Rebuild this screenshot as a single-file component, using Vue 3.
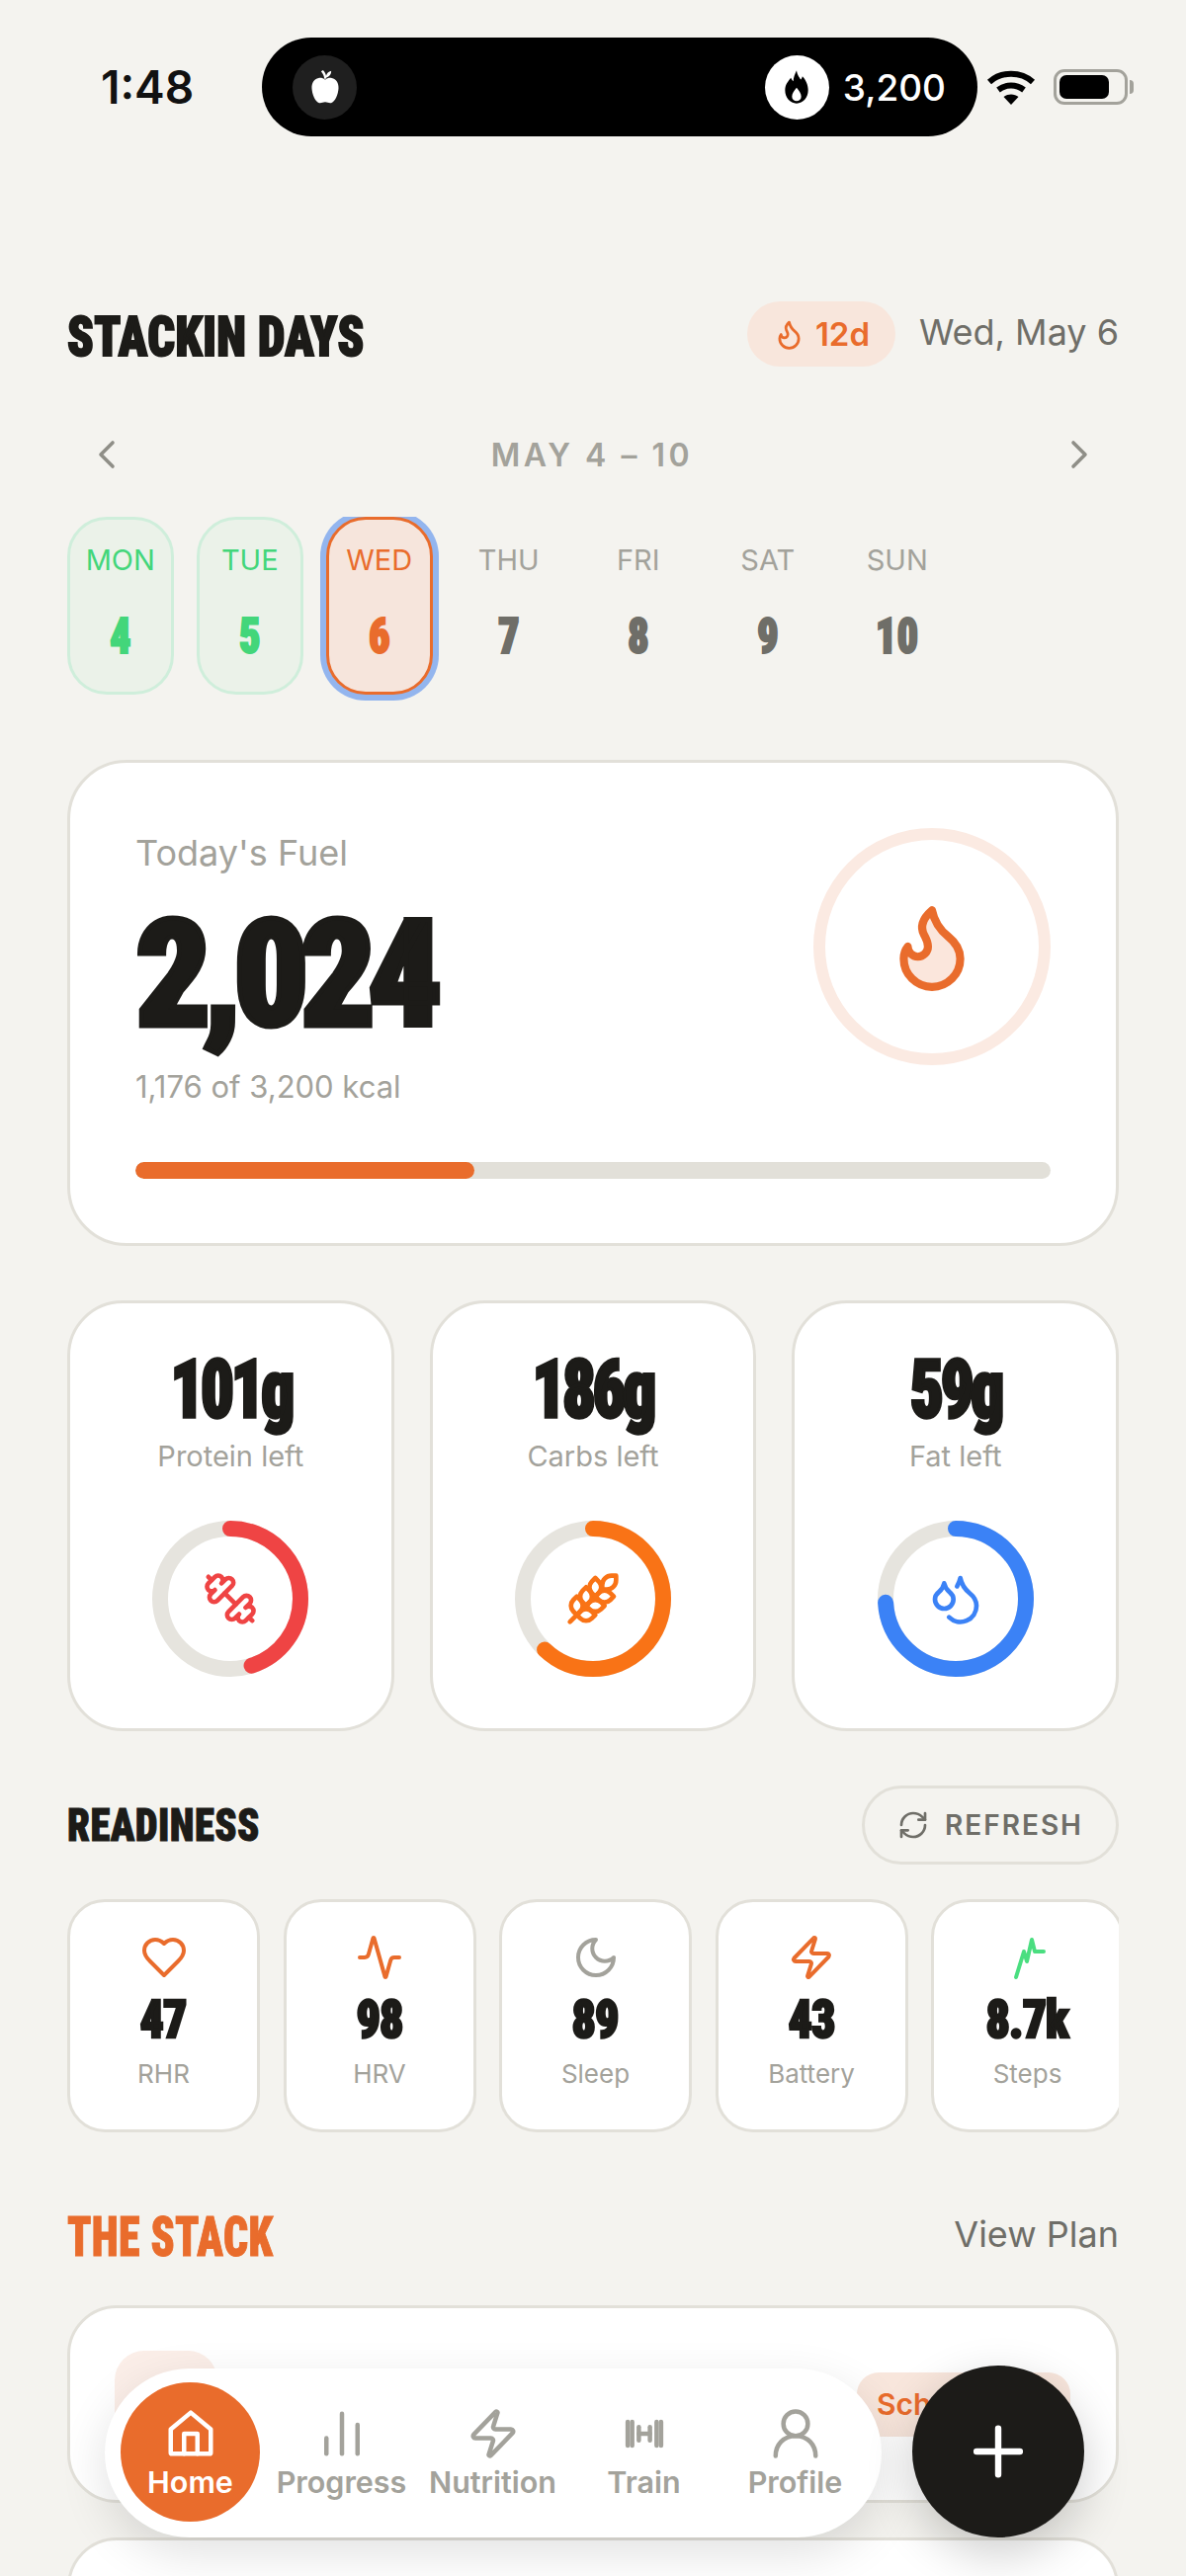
<template>
  <div class="screen">
    <!-- status bar -->
    <div class="status">
      <span class="clock">1:48</span>
      <div class="island">
        <span class="island-icon dark">
          <svg viewBox="0 0 24 24" width="40" height="40" fill="#fff">
            <path d="M12 7.6c1.2-.9 2.600-1.300 4-1 2.700.5 4.300 3 4.100 6.300-.2 3.700-2.100 8.100-4.500 8.800-1.200.3-2.200-.5-3.600-.5s-2.400.8-3.600.5c-2.400-.7-4.300-5.100-4.500-8.800C3.700 9.600 5.300 7.100 8 6.600c1.400-.3 2.800.1 4 1z" />
            <path d="M11.500 7c-.2-1.800-.8-3.200-2-4.500l1.200-.7c1 1 1.600 2.200 1.900 3.400.4-1.500 1.400-2.600 3.100-3 .1 1.900-1 3.500-3.100 4.200l-.1.600z" />
          </svg>
        </span>
        <span class="island-right">
          <span class="island-icon light">
            <svg viewBox="0 0 24 24" width="40" height="40" fill="#000">
              <path fill-rule="evenodd" d="M12 2c.4 3 1.800 4.300 2.500 5.500.5-.5.900-1.200 1-2 2 2 3.500 5 3.500 8.500 0 4.500-3 8-7 8s-7-3.500-7-8c0-3.500 2-5.500 3.500-7.500.5 1 .8 1.500 1.500 2C10 6.500 11 4 12 2zm0 10.500c-1.500 2-2.800 3.500-2.800 5.300 0 1.700 1.300 2.700 2.800 2.700s2.800-1 2.800-2.700c0-1.800-1.300-3.300-2.800-5.300z" />
            </svg>
          </span>
          <span class="island-num">3,200</span>
        </span>
      </div>
      <svg class="wifi" viewBox="0 0 50 36" width="50" height="36" fill="none" stroke="#000" stroke-width="6">
        <path d="M3 13C15 2 35 2 47 13" />
        <path d="M12 21c8-6 18-6 26 0" />
        <path d="M25 36l-7.500-8c4-3.500 11-3.500 15 0z" fill="#000" stroke="none" />
      </svg>
      <span class="battery"><i></i></span>
    </div>

    <!-- header -->
    <div class="head">
      <h1 class="disp title">STACKIN DAYS</h1>
      <div class="head-right">
        <span class="streak">
          <svg viewBox="0 0 24 24" width="33" height="33" fill="none" stroke="#e96c2c" stroke-width="2" stroke-linecap="round" stroke-linejoin="round"><path :d="flame" /></svg>
          12d
        </span>
        <span class="date">Wed, May 6</span>
      </div>
    </div>

    <div class="week-nav">
      <svg viewBox="0 0 24 24" width="48" height="48" fill="none" stroke="#8f8e87" stroke-width="1.8" stroke-linecap="round" stroke-linejoin="round"><path d="m15 18-6-6 6-6" /></svg>
      <span class="week-label">MAY 4 – 10</span>
      <svg viewBox="0 0 24 24" width="48" height="48" fill="none" stroke="#8f8e87" stroke-width="1.8" stroke-linecap="round" stroke-linejoin="round"><path d="m9 18 6-6-6-6" /></svg>
    </div>

    <div class="days">
      <div v-for="d in days" :key="d.name" class="day" :class="d.state">
        <span class="day-name">{{ d.name }}</span>
        <span class="disp day-num">{{ d.num }}</span>
      </div>
    </div>

    <!-- fuel card -->
    <div class="card fuel">
      <div class="fuel-top">
        <div>
          <div class="fuel-label">Today's Fuel</div>
          <div class="disp fuel-num">2,024</div>
          <div class="fuel-sub">1,176 of 3,200 kcal</div>
        </div>
        <div class="fuel-ring">
          <svg viewBox="0 0 24 24" width="98" height="98" fill="#fbe6dc" stroke="#e96c2c" stroke-width="2" stroke-linecap="round" stroke-linejoin="round"><path :d="flame" /></svg>
        </div>
      </div>
      <div class="bar"><div class="bar-fill" :style="{ width: '37%' }"></div></div>
    </div>

    <!-- macros -->
    <div class="macros">
      <div v-for="m in macros" :key="m.label" class="card macro">
        <div class="disp macro-num">{{ m.value }}</div>
        <div class="macro-label">{{ m.label }}</div>
        <div class="ring">
          <svg viewBox="0 0 158 158" width="158" height="158" fill="none" stroke-width="16">
            <circle cx="79" cy="79" r="71" stroke="#e6e4de" />
            <circle cx="79" cy="79" r="71" :stroke="m.color" stroke-linecap="round" :stroke-dasharray="`${m.pct * 446.1} 446.1`" transform="rotate(-90 79 79)" />
          </svg>
          <svg class="ring-icon" viewBox="0 0 24 24" width="56" height="56" fill="none" :stroke="m.color" stroke-width="2" stroke-linecap="round" stroke-linejoin="round">
            <path v-for="p in m.icon" :key="p" :d="p" />
          </svg>
        </div>
      </div>
    </div>

    <!-- readiness -->
    <div class="section-head ready-head">
      <h2 class="disp section ready">READINESS</h2>
      <button class="refresh">
        <svg viewBox="0 0 24 24" width="32" height="32" fill="none" stroke="#6f6e68" stroke-width="2" stroke-linecap="round" stroke-linejoin="round">
          <path d="M3 12a9 9 0 0 1 9-9 9.750 9.750 0 0 1 6.740 2.740L21 8" /><path d="M21 3v5h-5" /><path d="M21 12a9 9 0 0 1-9 9 9.750 9.750 0 0 1-6.740-2.740L3 16" /><path d="M8 16H3v5" />
        </svg>
        REFRESH
      </button>
    </div>
    <div class="metrics">
      <div v-for="m in metrics" :key="m.label" class="card metric">
        <svg viewBox="0 0 24 24" width="48" height="48" fill="none" :stroke="m.color" stroke-width="2" stroke-linecap="round" stroke-linejoin="round"><path :d="m.icon" /></svg>
        <div class="disp metric-num">{{ m.value }}</div>
        <div class="metric-label">{{ m.label }}</div>
      </div>
    </div>

    <!-- the stack -->
    <div class="section-head stack-head">
      <h2 class="disp section orange">THE STACK</h2>
      <span class="view-plan">View Plan</span>
    </div>
    <div class="card stack-card">
      <span class="stack-thumb"></span>
      <span class="stack-badge">Scheduled</span>
    </div>
    <div class="card stack-card"></div>

    <!-- floating nav -->
    <nav class="tabbar">
      <div v-for="t in tabs" :key="t.label" class="tab" :class="{ active: t.active }">
        <svg viewBox="0 0 24 24" width="54" height="54" fill="none" stroke="currentColor" stroke-width="2" stroke-linecap="round" stroke-linejoin="round">
          <path v-for="p in t.icon" :key="p" :d="p" />
        </svg>
        <span>{{ t.label }}</span>
      </div>
    </nav>
    <button class="fab">
      <svg viewBox="0 0 24 24" width="70" height="70" fill="none" stroke="#fff" stroke-width="2.200" stroke-linecap="round"><path d="M12 4v16M4.500 12h15" /></svg>
    </button>
  </div>
</template>

<script setup>
const flame = 'M8.5 14.5A2.5 2.5 0 0 0 11 12c0-1.38-.5-2-1-3-1.072-2.143-.224-4.054 2-6 .5 2.500 2 4.900 4 6.500 2 1.600 3 3.500 3 5.500a7 7 0 1 1-14 0c0-1.153.433-2.294 1-3a2.500 2.500 0 0 0 2.500 2.500z'
const zap = 'M4 14a1 1 0 0 1-.78-1.630l9.900-10.200a.5.5 0 0 1 .86.46l-1.920 6.020A1 1 0 0 0 13 10h7a1 1 0 0 1 .78 1.630l-9.900 10.200a.5.5 0 0 1-.86-.46l1.920-6.020A1 1 0 0 0 11 14z'

const days = [
  { name: 'MON', num: 4, state: 'done' },
  { name: 'TUE', num: 5, state: 'done' },
  { name: 'WED', num: 6, state: 'today' },
  { name: 'THU', num: 7, state: '' },
  { name: 'FRI', num: 8, state: '' },
  { name: 'SAT', num: 9, state: '' },
  { name: 'SUN', num: 10, state: '' }
]

const macros = [
  {
    value: '101g', label: 'Protein left', color: '#ef4444', pct: 0.45,
    icon: [
      'M14.400 14.400 9.600 9.600',
      'M18.657 21.485a2 2 0 1 1-2.829-2.828l-1.767 1.768a2 2 0 1 1-2.829-2.829l6.364-6.364a2 2 0 1 1 2.829 2.829l-1.768 1.767a2 2 0 1 1 2.828 2.829z',
      'm21.500 21.500-1.400-1.400',
      'M3.900 3.900 2.500 2.500',
      'M6.404 12.768a2 2 0 1 1-2.829-2.829l1.768-1.767a2 2 0 1 1-2.828-2.829l2.828-2.828a2 2 0 1 1 2.829 2.828l1.767-1.768a2 2 0 1 1 2.829 2.829z'
    ]
  },
  {
    value: '186g', label: 'Carbs left', color: '#f97316', pct: 0.62,
    icon: [
      'M2 22 16 8',
      'M3.470 12.530 5 11l1.530 1.530a3.500 3.500 0 0 1 0 4.940L5 19l-1.530-1.530a3.500 3.500 0 0 1 0-4.940Z',
      'M7.470 8.530 9 7l1.530 1.530a3.500 3.500 0 0 1 0 4.940L9 15l-1.530-1.530a3.500 3.500 0 0 1 0-4.940Z',
      'M11.470 4.530 13 3l1.530 1.530a3.500 3.500 0 0 1 0 4.940L13 11l-1.530-1.530a3.500 3.500 0 0 1 0-4.940Z',
      'M20 2h2v2a4 4 0 0 1-4 4h-2V6a4 4 0 0 1 4-4Z',
      'M11.470 17.470 13 19l-1.530 1.530a3.500 3.500 0 0 1-4.940 0L5 19l1.530-1.530a3.500 3.500 0 0 1 4.940 0Z',
      'M15.470 13.470 17 15l-1.530 1.530a3.500 3.500 0 0 1-4.940 0L9 15l1.530-1.530a3.500 3.500 0 0 1 4.940 0Z',
      'M19.470 9.470 21 11l-1.530 1.530a3.500 3.500 0 0 1-4.940 0L13 11l1.530-1.530a3.500 3.500 0 0 1 4.940 0Z'
    ]
  },
  {
    value: '59g', label: 'Fat left', color: '#3b82f6', pct: 0.74,
    icon: [
      'M7 16.300c2.200 0 4-1.830 4-4.050 0-1.160-.57-2.260-1.710-3.190S7.290 6.750 7 5.300c-.29 1.450-1.140 2.840-2.290 3.760S3 11.100 3 12.250c0 2.220 1.800 4.050 4 4.050z',
      'M12.560 6.600A10.970 10.970 0 0 0 14 3.020c.5 2.500 2 4.900 4 6.500s3 3.500 3 5.500a6.980 6.980 0 0 1-11.910 4.970'
    ]
  }
]

const metrics = [
  { value: '47', label: 'RHR', color: '#e96c2c', icon: 'M19 14c1.490-1.460 3-3.210 3-5.500A5.500 5.500 0 0 0 16.500 3c-1.760 0-3 .5-4.500 2-1.500-1.500-2.740-2-4.500-2A5.500 5.500 0 0 0 2 8.500c0 2.300 1.500 4.050 3 5.500l7 7Z' },
  { value: '98', label: 'HRV', color: '#e96c2c', icon: 'M22 12h-2.480a2 2 0 0 0-1.930 1.460l-2.350 8.360a.25.25 0 0 1-.48 0L9.240 2.180a.25.25 0 0 0-.48 0l-2.350 8.360A2 2 0 0 1 4.490 12H2' },
  { value: '89', label: 'Sleep', color: '#a3a29b', icon: 'M12 3a6 6 0 0 0 9 9 9 9 0 1 1-9-9Z' },
  { value: '43', label: 'Battery', color: '#e96c2c', icon: zap },
  { value: '8.7k', label: 'Steps', color: '#4ade80', icon: 'M6 22l4-13 1.500 5L14 3l1.500 6H20' }
]

const tabs = [
  { label: 'Home', active: true, icon: ['M3 10 12 2.500 21 10v10.500a.5.5 0 0 1-.5.5h-17a.5.5 0 0 1-.5-.5z', 'M9 21v-9h6v9'] },
  { label: 'Progress', icon: ['M12 21V3', 'M19 21V8', 'M5 21v-7'] },
  { label: 'Nutrition', icon: [zap] },
  { label: 'Train', icon: ['M4.500 6.700v10.600', 'M6.500 6.700v10.600', 'M17.500 6.700v10.600', 'M19.500 6.700v10.600', 'M9.500 9v6', 'M14.500 9v6', 'M9.500 12h5'] },
  { label: 'Profile', icon: ['M12 13a5.500 5.500 0 1 0 0-11 5.500 5.500 0 0 0 0 11z', 'M3 22c0-5 3.500-9 9-9s9 4 9 9'] }
]
</script>

<style scoped>
.screen {
  position: relative;
  height: 2607px;
  box-sizing: border-box;
  padding: 38px 68px 0;
  overflow: hidden;
  background: #f4f3ef;
  font-family: "Inter", "Liberation Sans", sans-serif;
  color: #1c1b18;
}

.disp {
  font-family: "Roboto", "Liberation Sans", sans-serif;
  font-weight: 900;
  font-stretch: 75%;
  -webkit-text-stroke: 1px currentColor;
}

h1, h2 { margin: 0; }

/* status */
.status {
  display: flex;
  align-items: center;
  height: 100px;
}
.clock {
  width: 197px;
  flex-shrink: 0;
  padding-left: 34px;
  box-sizing: border-box;
  font-size: 46px;
  font-weight: 600;
  color: #111;
}
.island {
  width: 724px;
  height: 100px;
  box-sizing: border-box;
  padding: 0 32px 0 31px;
  border-radius: 50px;
  background: #000;
  display: flex;
  align-items: center;
  justify-content: space-between;
  flex-shrink: 0;
}
.island-right { display: flex; align-items: center; gap: 14px; }
.island-icon {
  width: 65px;
  height: 65px;
  border-radius: 50%;
  display: flex;
  align-items: center;
  justify-content: center;
}
.island-icon.dark { background: #1f1f1f; }
.island-icon.light { background: #fff; }
.island-num { font-size: 37px; font-weight: 500; color: #fff; }
.wifi { margin-left: 9px; flex-shrink: 0; }
.battery {
  position: relative;
  margin-left: 18px;
  width: 75px;
  height: 36px;
  flex-shrink: 0;
  box-sizing: border-box;
  border: 3px solid #a3a29b;
  border-radius: 11px;
  padding: 3px;
  display: flex;
}
.battery i { display: block; width: 50px; background: #000; border-radius: 7px; }
.battery::after {
  content: "";
  position: absolute;
  right: -9px;
  top: 8px;
  width: 4px;
  height: 14px;
  border-radius: 0 4px 4px 0;
  background: #a3a29b;
}

/* header */
.head {
  margin-top: 167px;
  height: 66px;
  display: flex;
  align-items: center;
  justify-content: space-between;
}
.title {
  font-size: 55px;
  line-height: 1;
  letter-spacing: 0.5px;
  margin-top: 6px;
  -webkit-text-stroke-width: 2px;
  transform: scaleX(0.885);
  transform-origin: left center;
}
.head-right { display: flex; align-items: center; gap: 24px; }
.streak {
  height: 66px;
  width: 150px;
  box-sizing: border-box;
  border-radius: 33px;
  background: #f8e6dc;
  color: #e96c2c;
  font-size: 33px;
  font-weight: 600;
  display: flex;
  align-items: center;
  justify-content: center;
  gap: 10px;
}
.date { font-size: 36px; color: #6f6e68; margin-top: -5px; }

.week-nav {
  margin-top: 69px;
  height: 40px;
  padding: 0 16px;
  display: flex;
  align-items: center;
  justify-content: space-between;
}
.week-label { font-size: 32px; font-weight: 600; letter-spacing: 3.5px; color: #a3a29b; margin-right: 2px; }

.days {
  margin: 43px 0 0;
  height: 186px;
  overflow: hidden;
  display: flex;
  gap: 23.5px;
}
.day {
  width: 107.500px;
  height: 180px;
  box-sizing: border-box;
  flex-shrink: 0;
  border-radius: 40px;
  border: 3px solid transparent;
  display: flex;
  flex-direction: column;
  align-items: center;
  padding-top: 23px;
  color: #6f6e68;
}
.day-name { font-size: 29px; color: #a3a29b; }
.day-num {
  margin-top: 35px;
  font-size: 50px;
  line-height: 50px;
  -webkit-text-stroke-width: 2px;
  transform: scaleX(0.85);
}
.day.done { background: #ebf2e9; border-color: #cfeedb; color: #43d67a; }
.day.done .day-name { color: #43d67a; }
.day.today {
  background: #f6e5dc;
  border-color: #e96c2c;
  color: #e96c2c;
  box-shadow: 0 0 0 6px #93b5ee;
}
.day.today .day-name { color: #e96c2c; }

/* cards */
.card {
  background: #fff;
  border: 3px solid #e2e0d9;
  box-sizing: border-box;
}
.fuel {
  margin-top: 60px;
  height: 492px;
  border-radius: 60px;
  padding: 66px 66px 0;
}
.fuel-top { display: flex; justify-content: space-between; }
.fuel-label { font-size: 36px; color: #a3a29b; line-height: 44px; margin-top: 3px; }
.fuel-num {
  font-size: 150px;
  line-height: 150px;
  margin-top: 27px;
  letter-spacing: -9px;
  -webkit-text-stroke-width: 5px;
}
.fuel-sub { font-size: 31px; line-height: 40px; margin-top: 18px; color: #a3a29b; }
.fuel-ring {
  width: 240px;
  height: 240px;
  box-sizing: border-box;
  border-radius: 50%;
  border: 12px solid #fbeae2;
  display: flex;
  align-items: center;
  justify-content: center;
}
.bar { margin-top: 56px; height: 17px; border-radius: 9px; background: #e2e0d9; overflow: hidden; }
.bar-fill { height: 100%; border-radius: 9px; background: #e96c2c; }

.macros {
  margin-top: 55px;
  display: grid;
  grid-template-columns: repeat(3, 1fr);
  gap: 36px;
}
.macro {
  height: 436px;
  border-radius: 56px;
  padding-top: 48px;
  display: flex;
  flex-direction: column;
  align-items: center;
}
.macro-num {
  font-size: 81px;
  line-height: 80px;
  letter-spacing: -4px;
  -webkit-text-stroke-width: 3.5px;
  transform: scaleX(0.82);
}
.macro-label { font-size: 29px; line-height: 36px; margin-top: 9px; color: #a3a29b; }
.ring { position: relative; margin-top: 47px; width: 158px; height: 158px; }
.ring-icon { position: absolute; left: 51px; top: 51px; }

.section-head { display: flex; align-items: center; justify-content: space-between; }
.ready-head { margin-top: 55px; height: 80px; }
.section {
  font-size: 55px;
  line-height: 1;
  letter-spacing: 0.5px;
  transform: scaleX(0.80);
  transform-origin: left center;
}
.ready {
  font-size: 46px;
  transform: scaleX(0.883);
}
.orange { color: #e96c2c; }
.refresh {
  height: 80px;
  width: 260px;
  border-radius: 40px;
  border: 3px solid #e2e0d9;
  background: transparent;
  font-family: inherit;
  font-size: 28px;
  font-weight: 600;
  letter-spacing: 2px;
  color: #6f6e68;
  display: flex;
  align-items: center;
  justify-content: center;
  gap: 16px;
  padding: 0;
}
.metrics {
  margin-top: 35px;
  display: flex;
  gap: 23.5px;
  overflow: hidden;
}
.metric {
  width: 195px;
  height: 236px;
  flex-shrink: 0;
  border-radius: 38px;
  padding-top: 32px;
  display: flex;
  flex-direction: column;
  align-items: center;
}
.metric-num {
  font-size: 53px;
  line-height: 54px;
  margin-top: 12px;
  letter-spacing: -1px;
  -webkit-text-stroke-width: 2.5px;
  transform: scaleX(0.9);
}
.metric-label { font-size: 26px; line-height: 34px; margin-top: 11px; color: #a3a29b; }

.stack-head { margin-top: 81px; height: 50px; }
.view-plan { font-size: 36px; color: #6f6e68; margin-top: -7px; }
.stack-card {
  position: relative;
  margin-top: 35px;
  height: 200px;
  border-radius: 50px;
}
.stack-head + .stack-card { margin-top: 44px; }
.stack-thumb {
  position: absolute;
  left: 45px;
  top: 43px;
  width: 104px;
  height: 104px;
  border-radius: 30px;
  background: #fbeee8;
}
.stack-badge {
  position: absolute;
  left: 796px;
  top: 65px;
  width: 216px;
  height: 65px;
  box-sizing: border-box;
  padding-left: 20px;
  border-radius: 22px;
  background: #f8e6dc;
  color: #e96c2c;
  font-size: 30px;
  font-weight: 600;
  line-height: 65px;
}

/* floating nav */
.tabbar {
  position: absolute;
  left: 106px;
  top: 2397px;
  width: 786px;
  height: 171px;
  box-sizing: border-box;
  padding: 14px 10px;
  border-radius: 86px;
  background: #fff;
  box-shadow: 0 16px 48px rgba(0, 0, 0, 0.12);
  display: flex;
}
.tab {
  width: 153px;
  display: flex;
  flex-direction: column;
  align-items: center;
  padding-top: 25px;
  color: #a3a29b;
  font-size: 30.5px;
  font-weight: 600;
}
.tab span { margin-top: 3px; line-height: 38px; white-space: nowrap; }
.tab.active {
  width: 141px;
  margin: 0 6px;
  height: 141px;
  box-sizing: border-box;
  border-radius: 50%;
  background: #e96c2c;
  color: #fff;
}
.fab {
  position: absolute;
  left: 923px;
  top: 2394px;
  width: 174px;
  height: 174px;
  border: 0;
  border-radius: 50%;
  background: #1c1b18;
  box-shadow: 0 16px 48px rgba(0, 0, 0, 0.2);
  display: flex;
  align-items: center;
  justify-content: center;
  padding: 0;
}
</style>

<style>
html, body { margin: 0; overflow: hidden; background: #f4f3ef; }
</style>
